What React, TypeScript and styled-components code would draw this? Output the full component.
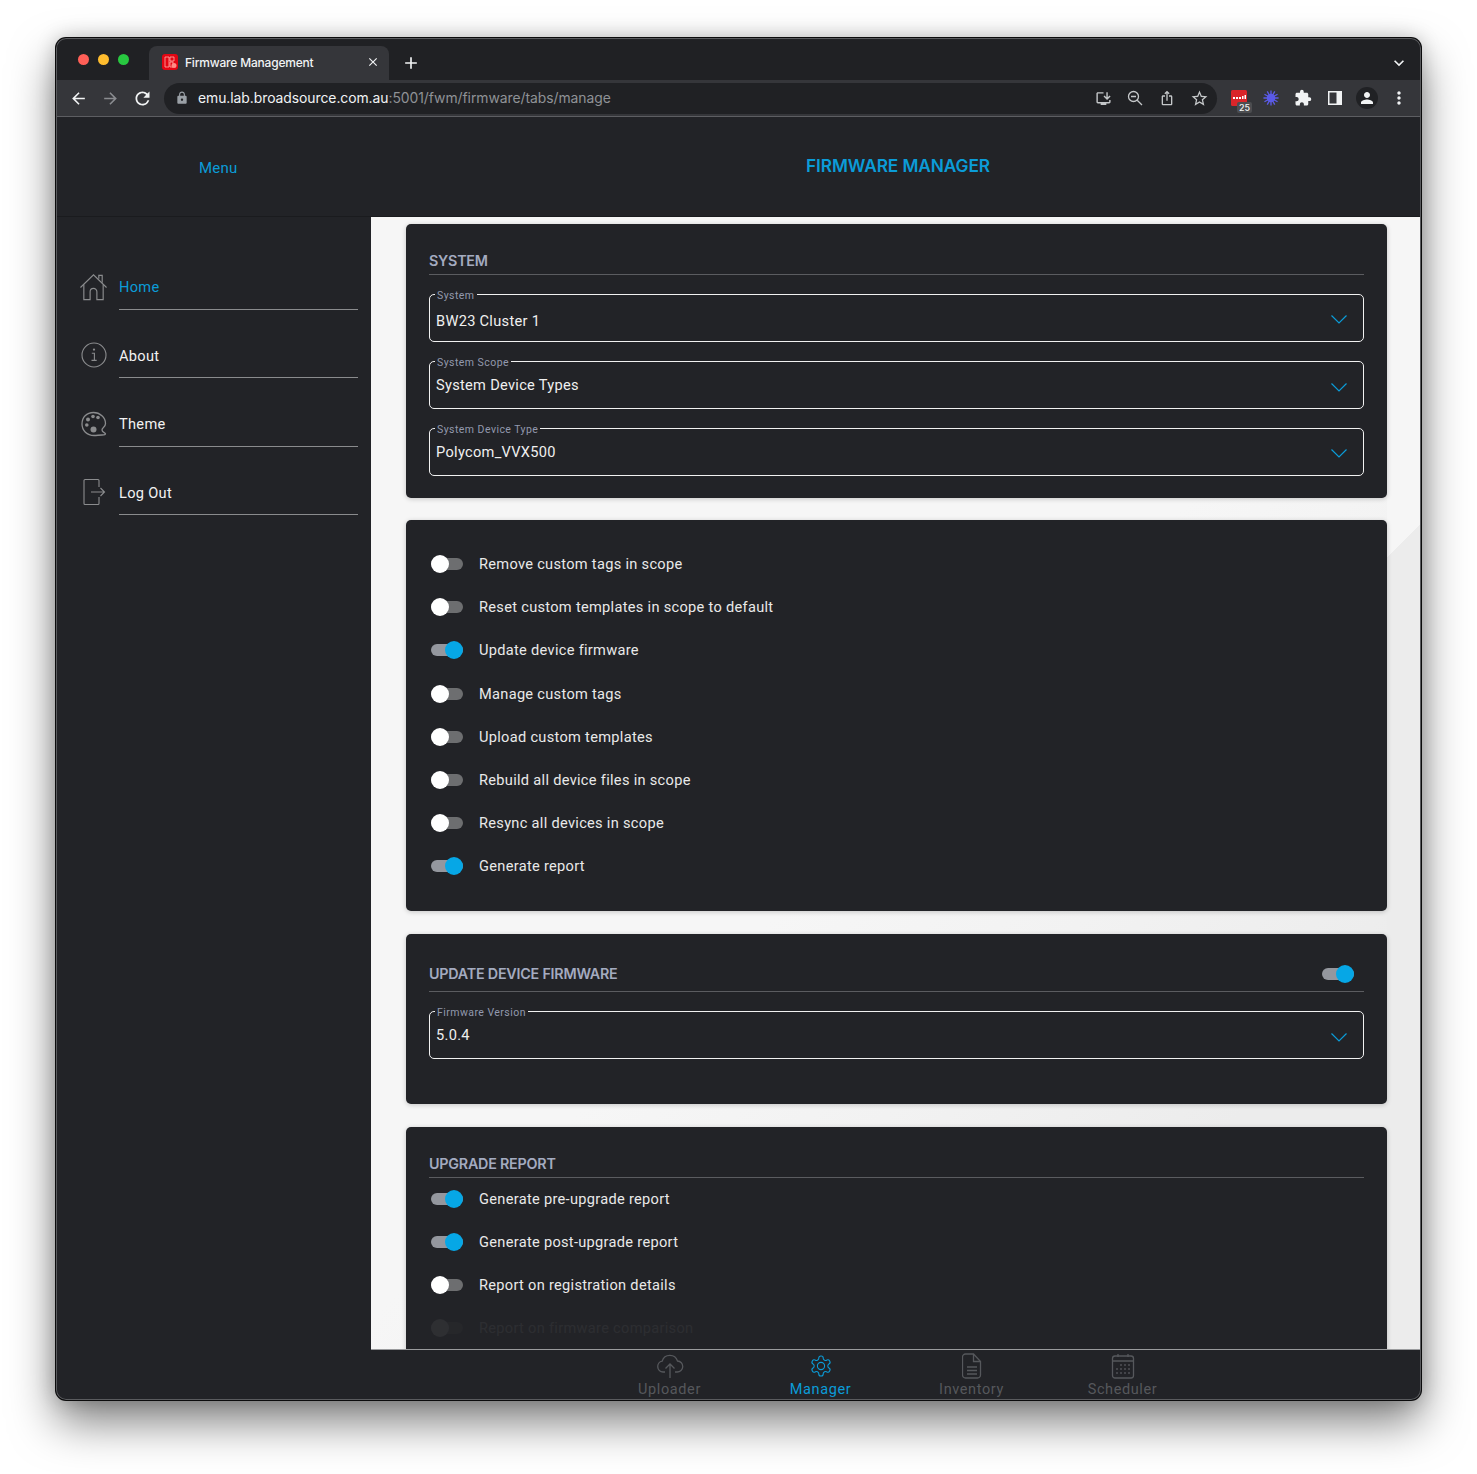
import React from 'react';
import styled, {createGlobalStyle} from 'styled-components';
import {
  MdAdd,
  MdArrowBack,
  MdArrowForward,
  MdClose,
  MdExtension,
  MdInstallDesktop,
  MdIosShare,
  MdKeyboardArrowDown,
  MdLock,
  MdMoreVert,
  MdPerson,
  MdRefresh,
  MdStarBorder,
} from 'react-icons/md';

const BLUE = '#0b9cd8';
const PANEL = '#222327';
const BODY_FONT = `Roboto, 'Noto Sans', sans-serif`;
const CHROME_FONT = `Inter, 'Liberation Sans', sans-serif`;

const GlobalStyle = createGlobalStyle`
  html, body {
    margin: 0;
    padding: 0;
    background: #fff;
  }
  body {
    width: 1477px;
    height: 1474px;
    overflow: hidden;
    font-family: ${BODY_FONT};
  }
`;

const HomeIcon = () => (
  <svg width={30} height={30} viewBox="0 0 30 30" fill="none" stroke="#8b8c8e" strokeWidth={1.2}>
    <path d="M1.5 15.5 15 2.5l13.5 13" />
    <path d="M20.5 6.5V3h3.5v7.5" />
    <path d="M5 12.5V28h6.5v-8a3.5 3.5 0 0 1 7 0v8H25V12.5" />
  </svg>
);

const InfoIcon = () => (
  <svg width={26} height={26} viewBox="0 0 26 26" fill="none" stroke="#8b8c8e" strokeWidth={1.1}>
    <circle cx={13} cy={13} r={12} />
    <path d="M10.8 11.2h2.6v7M10.5 18.4h5.2" />
    <circle cx={13} cy={7.6} r={0.6} fill="#8b8c8e" />
  </svg>
);

const PaletteIcon = () => (
  <svg width={26} height={26} viewBox="0 0 26 26" fill="none" stroke="#8b8c8e" strokeWidth={1.3}>
    <path d="M12.5 1.5C5.5 1.5 1 6.5 1 13c0 6.500 5 11.500 12 11.500 3.500 0 4.500-.5 8-.5 2 0 3.500 0 3.500-1.200 0-1.300-3.500-1.300-3.500-3.800 0-2.500 3.500-2.500 3.500-6.500 0-6-5.500-11-12-11Z" />
    <g fill="#8b8c8e" stroke="none">
      <circle cx={7} cy={8.5} r={2} />
      <circle cx={12} cy={5.5} r={1.8} />
      <circle cx={17} cy={6.5} r={1.8} />
      <circle cx={5.8} cy={14} r={1.8} />
      <circle cx={12.5} cy={18.5} r={3} />
    </g>
  </svg>
);

const LogOutIcon = () => (
  <svg width={26} height={28} viewBox="0 0 26 28" fill="none" stroke="#8b8c8e" strokeWidth={1.1}>
    <path d="M18 9V2.500a1 1 0 0 0-1-1H4a1 1 0 0 0-1 1v23a1 1 0 0 0 1 1h13a1 1 0 0 0 1-1V19" />
    <path d="M10 14h13M19.500 10l4 4-4 4" />
  </svg>
);

const CloudIcon = () => (
  <svg width={28} height={26} viewBox="0 0 28 26" fill="none" stroke="currentColor" strokeWidth={1.3}>
    <path d="M9 19H7a5.5 5.5 0 0 1-.8-10.9A8 8 0 0 1 21.5 8 5.5 5.5 0 0 1 21 19h-2" />
    <path d="M14 25V11M9.5 15.5 14 11l4.5 4.5" />
  </svg>
);

const GearIcon = () => (
  <svg width={24} height={24} viewBox="0 0 24 24" fill="none" stroke="currentColor" strokeWidth={1.1}>
    <circle cx={12} cy={12} r={3.6} />
    <path d="M12.22 2h-.44a2 2 0 0 0-2 2v.18a2 2 0 0 1-1 1.73l-.43.25a2 2 0 0 1-2 0l-.15-.08a2 2 0 0 0-2.73.73l-.22.38a2 2 0 0 0 .73 2.73l.15.1a2 2 0 0 1 1 1.72v.51a2 2 0 0 1-1 1.74l-.15.09a2 2 0 0 0-.73 2.73l.22.38a2 2 0 0 0 2.73.73l.15-.08a2 2 0 0 1 2 0l.43.25a2 2 0 0 1 1 1.73V20a2 2 0 0 0 2 2h.44a2 2 0 0 0 2-2v-.18a2 2 0 0 1 1-1.73l.43-.25a2 2 0 0 1 2 0l.15.08a2 2 0 0 0 2.73-.73l.22-.39a2 2 0 0 0-.73-2.73l-.15-.08a2 2 0 0 1-1-1.74v-.5a2 2 0 0 1 1-1.74l.15-.09a2 2 0 0 0 .73-2.73l-.22-.38a2 2 0 0 0-2.73-.73l-.15.08a2 2 0 0 1-2 0l-.43-.25a2 2 0 0 1-1-1.73V4a2 2 0 0 0-2-2Z" />
  </svg>
);

const FileIcon = () => (
  <svg width={20} height={26} viewBox="0 0 20 26" fill="none" stroke="currentColor" strokeWidth={1.3}>
    <path d="M3.5 1h8L18.5 8.500V22a3 3 0 0 1-3 3h-12a3 3 0 0 1-3-3V4a3 3 0 0 1 3-3Z" />
    <path d="M11.500 1v7.500h7M5 14h10M5 17.500h10M5 21h10" />
  </svg>
);

const CalendarIcon = () => (
  <svg width={24} height={26} viewBox="0 0 24 26" fill="none" stroke="currentColor" strokeWidth={1.3}>
    <rect x={1.5} y={3} width={21} height={22} rx={2.5} />
    <path d="M1.500 8h21M7 1v3M17 1v3" />
    <g fill="currentColor" stroke="none">
      {[12, 16, 20].map((y) =>
        [6, 10, 14, 18].map((x) =>
          y === 12 && x < 10 ? null : <rect key={`${x}-${y}`} x={x - 0.8} y={y - 0.8} width={1.6} height={1.6} />,
        ),
      )}
    </g>
  </svg>
);

const ZoomOutIcon = () => (
  <svg width={16} height={16} viewBox="0 0 16 16" fill="none" stroke="#c4c7c9" strokeWidth={1.3}>
    <circle cx={6.5} cy={6.5} r={5} />
    <path d="M4 6.500h5M10.200 10.200 15 15" />
  </svg>
);

const Favicon = () => (
  <svg width={16} height={16} viewBox="0 0 16 16" fill="none">
    <rect width={16} height={16} rx={3} fill="#e30613" />
    <path d="M3 3h4v10H3zM8 3h4v4H8zM8 8h3v5H8z" stroke="#ffb0a8" strokeWidth={0.8} />
    <circle cx={12} cy={11.500} r={2.500} fill="#ff8d86" />
  </svg>
);

const CalendarExtension = () => (
  <svg width={16} height={16} viewBox="0 0 16 16">
    <rect width={16} height={16} rx={1.5} fill="#d9252a" />
    <path d="M2 7h2v2H2zM5 7h2v2H5zM8 7h2v2H8zM11 6h1.500v3H11zM13.500 5H15v4h-1.500z" fill="#fff" />
  </svg>
);

const SparkExtension = () => (
  <svg width={16} height={16} viewBox="0 0 18 18" fill="none" stroke="#5b5be8" strokeWidth={1.5}>
    <circle cx={9} cy={9} r={4} fill="#5b5be8" />
    {[0, 30, 60, 90, 120, 150].map((a) => (
      <path key={a} d="M9 .5v17" transform={`rotate(${a} 9 9)`} />
    ))}
  </svg>
);

const SidePanelIcon = () => (
  <svg width={14} height={14} viewBox="0 0 14 14">
    <path fillRule="evenodd" d="M0 0h14v14H0zM1.500 1.500v11H8.500v-11z" fill="#f1f3f4" />
  </svg>
);

const ChevronMark = styled.svg<{$drop?: number}>`
  flex: none;
  margin-top: ${(props) => props.$drop ?? 5}px;
`;

const Chevron = ({drop}: {drop?: number}) => (
  <ChevronMark $drop={drop} width={16} height={9} viewBox="0 0 16 9" fill="none" stroke={BLUE} strokeWidth={1.2}>
    <path d="M.5.5 8 8 15.500.5" />
  </ChevronMark>
);

const Window = styled.div`
  position: relative;
  margin: 38px 0 0 56px;
  width: 1365px;
  height: 1362px;
  display: flex;
  flex-direction: column;
  border-radius: 10px;
  overflow: hidden;
  background: ${PANEL};
  box-shadow:
    0 0 0 1px #0b0b0c,
    0 22px 45px rgba(0, 0, 0, 0.5),
    0 0 20px rgba(0, 0, 0, 0.22);
  &::after {
    content: '';
    position: absolute;
    inset: 0;
    border-radius: 10px;
    box-shadow: inset 0 0 0 1px #5a5b5e;
    pointer-events: none;
  }
`;

const TabStrip = styled.div`
  height: 42px;
  flex: none;
  display: flex;
  align-items: flex-end;
  background: #202124;
  padding-left: 22px;
  color: #f1f3f4;
  font-family: ${CHROME_FONT};
`;

const Lights = styled.div`
  display: flex;
  gap: 9px;
  align-self: flex-start;
  margin: 16px 20px 0 0;
`;

const Light = styled.span<{color: string}>`
  width: 11px;
  height: 11px;
  border-radius: 50%;
  background: ${(props) => props.color};
`;

const Tab = styled.div`
  width: 240px;
  height: 34px;
  box-sizing: border-box;
  display: flex;
  align-items: center;
  padding: 0 9px 2px 13px;
  gap: 7px;
  background: #35363a;
  border-radius: 8px 8px 0 0;
  font-size: 12px;
  font-weight: 500;
  letter-spacing: -0.2px;
  white-space: nowrap;
`;

const TabTitle = styled.span`
  flex: 1;
`;

const NewTab = styled.div`
  display: flex;
  height: 34px;
  align-items: center;
  margin-left: 12px;
  box-sizing: border-box;
`;

const TabMenu = styled.div`
  margin-left: auto;
  margin-right: 12px;
  height: 34px;
  display: flex;
  align-items: center;
  box-sizing: border-box;
`;

const Toolbar = styled.div`
  height: 37px;
  flex: none;
  box-sizing: border-box;
  display: flex;
  align-items: center;
  padding: 0 6px;
  background: #35363a;
  border-bottom: 1px solid #5d5e62;
  color: #e8eaed;
`;

const ToolButton = styled.div<{dim?: boolean}>`
  width: 32px;
  height: 32px;
  flex: none;
  position: relative;
  display: flex;
  align-items: center;
  justify-content: center;
  color: ${(props) => (props.dim ? '#8a8c90' : '#f1f3f4')};
`;

const Omnibox = styled.div`
  width: 1053px;
  height: 31px;
  margin: 0 6px 0 6px;
  flex: none;
  display: flex;
  align-items: center;
  box-sizing: border-box;
  padding: 0 2px 0 11px;
  border-radius: 16px;
  background: #202124;
`;

const Url = styled.div`
  flex: 1;
  margin-left: 9px;
  font-family: ${CHROME_FONT};
  font-size: 13.900px;
  letter-spacing: -0.05px;
  color: #8f9296;
`;

const Host = styled.span`
  color: #f1f3f4;
`;

const Badge = styled.span`
  position: absolute;
  left: 14px;
  top: 20px;
  padding: 0 2px;
  border-radius: 2px;
  background: #4c4d50;
  color: #f1f3f4;
  font-family: ${CHROME_FONT};
  font-size: 9px;
  font-weight: 500;
  line-height: 11px;
`;

const Avatar = styled.span`
  width: 22px;
  height: 22px;
  border-radius: 50%;
  background: #202124;
  display: flex;
  align-items: center;
  justify-content: center;
`;

const AppHeader = styled.header`
  height: 100px;
  flex: none;
  display: flex;
  align-items: center;
  border-bottom: 1px solid #1a1b1e;
  box-sizing: border-box;
`;

const MenuLabel = styled.div`
  width: 315px;
  flex: none;
  box-sizing: border-box;
  padding: 3px 0 0 143px;
  font-size: 15px;
  letter-spacing: 0.25px;
  color: ${BLUE};
`;

const AppTitle = styled.h1`
  flex: 1;
  margin: 0;
  padding: 0 0 2px 4px;
  text-align: center;
  font-family: ${CHROME_FONT};
  font-size: 17.300px;
  font-weight: 600;
  letter-spacing: -0.1px;
  color: ${BLUE};
`;

const Body = styled.div`
  flex: 1;
  min-height: 0;
  display: flex;
`;

const Sidebar = styled.nav`
  width: 315px;
  flex: none;
  box-sizing: border-box;
  padding: 46px 13px 0 23px;
`;

const NavItem = styled.div`
  height: 68.600px;
  display: flex;
  align-items: flex-start;
  gap: 11px;
`;

const NavIcon = styled.div`
  width: 29px;
  height: 47px;
  flex: none;
  display: flex;
  align-items: center;
  justify-content: center;
`;

const NavLabel = styled.div<{active?: boolean}>`
  flex: 1;
  height: 45.500px;
  line-height: 48px;
  border-bottom: 1px solid #8a8b8d;
  font-size: 14.600px;
  letter-spacing: 0.3px;
  color: ${(props) => (props.active ? BLUE : '#f2f2f2')};
`;

const Content = styled.div`
  flex: 1;
  min-width: 0;
  display: flex;
  flex-direction: column;
`;

const Main = styled.main`
  flex: 1;
  min-height: 0;
  overflow: hidden;
  box-sizing: border-box;
  padding: 7px 34px 0 35px;
  display: flex;
  flex-direction: column;
  gap: 22px;
  background:
    linear-gradient(135deg, #f6f6f6 241px, #ececec 241px) right top / 34px 100% no-repeat,
    linear-gradient(135deg, #f6f6f6 780px, #f2f2f2 1000px, #ececec 1250px);
`;

const Card = styled.section<{$pad?: number}>`
  flex: none;
  box-sizing: border-box;
  padding: 23px 23px ${(props) => props.$pad ?? 22}px;
  border-radius: 5px;
  background: ${PANEL};
  box-shadow: 0 1px 5px rgba(0, 0, 0, 0.2);
  & + & + & {
    margin-top: 1px;
  }
`;

const CardHeader = styled.div<{$height?: number}>`
  height: ${(props) => props.$height ?? 28}px;
  box-sizing: border-box;
  display: flex;
  align-items: center;
  justify-content: space-between;
  padding-right: 10px;
  border-bottom: 1px solid #5b5c60;
`;

const CardTitle = styled.h2`
  margin: 0;
  font-family: ${CHROME_FONT};
  font-size: 14.300px;
  font-weight: 600;
  letter-spacing: -0.22px;
  color: #a4abc0;
`;

const Fields = styled.div`
  margin-top: 19px;
  display: flex;
  flex-direction: column;
  gap: 19px;
`;

const Field = styled.div<{$nudge?: number}>`
  position: relative;
  height: 48px;
  box-sizing: border-box;
  display: flex;
  align-items: center;
  justify-content: space-between;
  padding: ${(props) => props.$nudge ?? 0}px 16px 0 6px;
  border: 1px solid #f1f1f1;
  border-radius: 5px;
`;

const FieldLabel = styled.span`
  position: absolute;
  left: 5px;
  top: -6px;
  padding: 0 2px;
  background: ${PANEL};
  font-size: 10.500px;
  line-height: 13px;
  letter-spacing: 0.45px;
  color: #9299ad;
`;

const FieldValue = styled.span`
  font-size: 14.600px;
  letter-spacing: 0.3px;
  color: #f0f0f0;
`;

const Rows = styled.div`
  margin-top: -0.600px;
`;

const Row = styled.div<{$faded?: boolean}>`
  height: 43.200px;
  display: flex;
  align-items: center;
  gap: 16px;
  opacity: ${(props) => (props.$faded ? 0.05 : 1)};
`;

const RowLabel = styled.span`
  font-size: 14.600px;
  letter-spacing: 0.3px;
  color: #e9e9e9;
`;

const Switch = styled.span<{on?: boolean}>`
  position: relative;
  width: 32px;
  height: 12px;
  margin-left: 2px;
  flex: none;
  display: block;
  border-radius: 6px;
  background: ${(props) => (props.on ? '#94979e' : '#6d6e70')};
  &::after {
    content: '';
    position: absolute;
    top: -3px;
    left: ${(props) => (props.on ? '14px' : '0')};
    width: 18px;
    height: 18px;
    border-radius: 50%;
    background: ${(props) => (props.on ? '#06a7e6' : '#fff')};
  }
`;

const Footer = styled.footer`
  height: 51px;
  flex: none;
  box-sizing: border-box;
  display: flex;
  justify-content: center;
  border-top: 1px solid #9a9b9d;
  background: ${PANEL};
`;

const FooterTab = styled.div<{active?: boolean}>`
  width: 151px;
  height: 50px;
  box-sizing: border-box;
  padding-top: 3px;
  display: flex;
  flex-direction: column;
  align-items: center;
  color: ${(props) => (props.active ? BLUE : '#56585c')};
`;

const FooterIcon = styled.div`
  height: 26px;
  margin-bottom: 1px;
  display: flex;
  align-items: center;
  justify-content: center;
`;

const FooterLabel = styled.span`
  font-size: 14.500px;
  line-height: 20px;
  letter-spacing: 0.6px;
`;

const navItems = [
  {label: 'Home', icon: <HomeIcon />, active: true},
  {label: 'About', icon: <InfoIcon />},
  {label: 'Theme', icon: <PaletteIcon />},
  {label: 'Log Out', icon: <LogOutIcon />},
];

const actions = [
  {label: 'Remove custom tags in scope'},
  {label: 'Reset custom templates in scope to default'},
  {label: 'Update device firmware', on: true},
  {label: 'Manage custom tags'},
  {label: 'Upload custom templates'},
  {label: 'Rebuild all device files in scope'},
  {label: 'Resync all devices in scope'},
  {label: 'Generate report', on: true},
];

const reports = [
  {label: 'Generate pre-upgrade report', on: true},
  {label: 'Generate post-upgrade report', on: true},
  {label: 'Report on registration details'},
  {label: 'Report on firmware comparison', faded: true},
];

const footerTabs = [
  {label: 'Uploader', icon: <CloudIcon />},
  {label: 'Manager', icon: <GearIcon />, active: true},
  {label: 'Inventory', icon: <FileIcon />},
  {label: 'Scheduler', icon: <CalendarIcon />},
];

export default function App() {
  return (
    <>
      <GlobalStyle />
      <Window>
        <TabStrip>
          <Lights>
            <Light color="#ff5f57" />
            <Light color="#febc2e" />
            <Light color="#28c840" />
          </Lights>
          <Tab>
            <Favicon />
            <TabTitle>Firmware Management</TabTitle>
            <MdClose size={14} />
          </Tab>
          <NewTab>
            <MdAdd size={20} />
          </NewTab>
          <TabMenu>
            <MdKeyboardArrowDown size={20} />
          </TabMenu>
        </TabStrip>
        <Toolbar>
          <ToolButton>
            <MdArrowBack size={19} />
          </ToolButton>
          <ToolButton dim>
            <MdArrowForward size={19} />
          </ToolButton>
          <ToolButton>
            <MdRefresh size={21} />
          </ToolButton>
          <Omnibox>
            <MdLock size={14} color="#9aa0a6" />
            <Url>
              <Host>emu.lab.broadsource.com.au</Host>:5001/fwm/firmware/tabs/manage
            </Url>
            <ToolButton dim>
              <MdInstallDesktop size={17} color="#c4c7c9" />
            </ToolButton>
            <ToolButton dim>
              <ZoomOutIcon />
            </ToolButton>
            <ToolButton dim>
              <MdIosShare size={16} color="#c4c7c9" />
            </ToolButton>
            <ToolButton dim>
              <MdStarBorder size={19} color="#c4c7c9" />
            </ToolButton>
          </Omnibox>
          <ToolButton>
            <CalendarExtension />
            <Badge>25</Badge>
          </ToolButton>
          <ToolButton>
            <SparkExtension />
          </ToolButton>
          <ToolButton>
            <MdExtension size={18} />
          </ToolButton>
          <ToolButton>
            <SidePanelIcon />
          </ToolButton>
          <ToolButton>
            <Avatar>
              <MdPerson size={18} />
            </Avatar>
          </ToolButton>
          <ToolButton>
            <MdMoreVert size={20} />
          </ToolButton>
        </Toolbar>
        <AppHeader>
          <MenuLabel>Menu</MenuLabel>
          <AppTitle>FIRMWARE MANAGER</AppTitle>
        </AppHeader>
        <Body>
          <Sidebar>
            {navItems.map((item) => (
              <NavItem key={item.label}>
                <NavIcon>{item.icon}</NavIcon>
                <NavLabel active={item.active}>{item.label}</NavLabel>
              </NavItem>
            ))}
          </Sidebar>
          <Content>
            <Main>
              <Card>
                <CardHeader>
                  <CardTitle>SYSTEM</CardTitle>
                </CardHeader>
                <Fields>
                  <Field $nudge={6}>
                    <FieldLabel>System</FieldLabel>
                    <FieldValue>BW23 Cluster 1</FieldValue>
                    <Chevron drop={-3} />
                  </Field>
                  <Field>
                    <FieldLabel>System Scope</FieldLabel>
                    <FieldValue>System Device Types</FieldValue>
                    <Chevron />
                  </Field>
                  <Field>
                    <FieldLabel>System Device Type</FieldLabel>
                    <FieldValue>Polycom_VVX500</FieldValue>
                    <Chevron drop={3} />
                  </Field>
                </Fields>
              </Card>
              <Card $pad={23}>
                <Rows>
                  {actions.map((row) => (
                    <Row key={row.label}>
                      <Switch on={row.on} />
                      <RowLabel>{row.label}</RowLabel>
                    </Row>
                  ))}
                </Rows>
              </Card>
              <Card $pad={45}>
                <CardHeader $height={35}>
                  <CardTitle>UPDATE DEVICE FIRMWARE</CardTitle>
                  <Switch on />
                </CardHeader>
                <Fields>
                  <Field>
                    <FieldLabel>Firmware Version</FieldLabel>
                    <FieldValue>5.0.4</FieldValue>
                    <Chevron />
                  </Field>
                </Fields>
              </Card>
              <Card>
                <CardHeader>
                  <CardTitle>UPGRADE REPORT</CardTitle>
                </CardHeader>
                <Rows>
                  {reports.map((row) => (
                    <Row key={row.label} $faded={row.faded}>
                      <Switch on={row.on} />
                      <RowLabel>{row.label}</RowLabel>
                    </Row>
                  ))}
                </Rows>
              </Card>
            </Main>
            <Footer>
              {footerTabs.map((tab) => (
                <FooterTab key={tab.label} active={tab.active}>
                  <FooterIcon>{tab.icon}</FooterIcon>
                  <FooterLabel>{tab.label}</FooterLabel>
                </FooterTab>
              ))}
            </Footer>
          </Content>
        </Body>
      </Window>
    </>
  );
}
